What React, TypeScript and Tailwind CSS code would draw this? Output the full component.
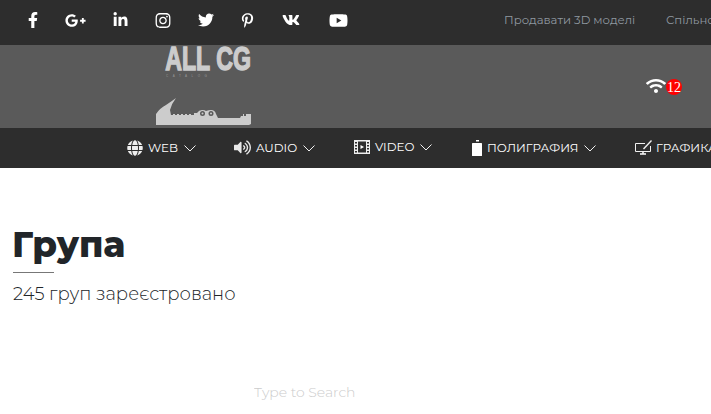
import { FaFacebookF, FaGooglePlusG, FaLinkedinIn, FaInstagram, FaTwitter, FaPinterestP, FaVk, FaYoutube, FaWifi, FaGlobe, FaVolumeUp } from "react-icons/fa";

const Chevron = () => (
  <svg width="12" height="7" viewBox="0 0 12 7" fill="none" stroke="#f0f0f0" strokeWidth="1" className="ml-[6px] mt-[1px]">
    <path d="M0.5 0.5 L6 6 L11.5 0.5" />
  </svg>
);

const VideoIcon = () => (
  <svg width="16" height="14" viewBox="0 0 16 14" fill="#eeeeee">
    <path fillRule="evenodd" d="M0 0h16v14H0z M4 1.500v11h8v-11z" />
    <rect x="1" y="2" width="2" height="1.500" fill="#2d2d2d" />
    <rect x="1" y="5" width="2" height="1.500" fill="#2d2d2d" />
    <rect x="1" y="8" width="2" height="1.500" fill="#2d2d2d" />
    <rect x="1" y="11" width="2" height="1.500" fill="#2d2d2d" />
    <rect x="13" y="2" width="2" height="1.500" fill="#2d2d2d" />
    <rect x="13" y="5" width="2" height="1.500" fill="#2d2d2d" />
    <rect x="13" y="8" width="2" height="1.500" fill="#2d2d2d" />
    <rect x="13" y="11" width="2" height="1.500" fill="#2d2d2d" />
    <path d="M6.500 5 L10 7 L6.500 9z" fill="#ffffff" />
  </svg>
);

const PrintIcon = () => (
  <svg width="10" height="16" viewBox="0 0 10 16" fill="#ffffff">
    <rect x="0" y="3" width="10" height="13" rx="0.500" />
    <rect x="4" y="0" width="3" height="1.500" />
  </svg>
);

const MonitorIcon = () => (
  <svg width="18" height="15" viewBox="0 0 18 15" fill="none" stroke="#f0f0f0" strokeWidth="1">
    <path d="M10 3.500H0.500V11.500H15.500V6" />
    <path d="M8.500 9 L16.500 0.500" strokeWidth="1.400" />
    <path d="M5 14h6" strokeWidth="1.600" />
    <path d="M8 12v2" strokeWidth="1.600" />
  </svg>
);

const socials = [
  { Icon: FaFacebookF, size: 16, w: 10 },
  { Icon: FaGooglePlusG, size: 21, w: 21 },
  { Icon: FaLinkedinIn, size: 16, w: 15 },
  { Icon: FaInstagram, size: 17, w: 16 },
  { Icon: FaTwitter, size: 16, w: 16 },
  { Icon: FaPinterestP, size: 15, w: 13 },
  { Icon: FaVk, size: 18, w: 19 },
  { Icon: FaYoutube, size: 19, w: 22 },
];

export default function App() {
  return (
    <div className="w-[711px] h-[414px] overflow-hidden bg-white font-['Montserrat','Inter','Liberation_Sans',sans-serif]">
      <div className="h-[45px] bg-[#2d2d2d] flex items-center pl-[28px] overflow-hidden">
        <div className="flex items-center gap-[27px] w-[476px] shrink-0 -mt-[5px]">
          {socials.map(({ Icon, size, w }, i) => (
            <span key={i} className="flex justify-center text-white" style={{ width: w }}>
              <Icon size={size} />
            </span>
          ))}
        </div>
        <span className="text-[11.700px] text-[#8f98a0] whitespace-nowrap w-[162px] shrink-0 -mt-[3px]">Продавати 3D моделі</span>
        <span className="text-[11.700px] text-[#8f98a0] whitespace-nowrap -mt-[3px]">Спільнота</span>
      </div>

      <div className="h-[83px] bg-[#5a5a5a] flex justify-between overflow-hidden">
        <div className="ml-[155px] w-[96px] flex flex-col items-end">
          <div className="font-['Liberation_Sans',sans-serif] font-bold text-[34px] leading-[26px] text-[#cccccc] [-webkit-text-stroke:1.500px_#cccccc] whitespace-nowrap scale-x-[0.68] origin-right h-[28px]">ALL CG</div>
          <div className="self-start mt-[1px] ml-[11px] w-[43px] text-[3px] leading-[4px] tracking-[4.500px] text-[#999999] font-['Liberation_Sans',sans-serif] whitespace-nowrap overflow-hidden">CATALOG</div>
          <svg width="95" height="27" viewBox="0 0 95 27" fill="#cccccc" className="mt-[20px] self-end">
            <path d="M0 27V16Q4 10 10 7Q16 3 20 0Q16 5 14 12L15 17H17V16H19V17H21V16H23V17H25V16H27V17H29V16H31V17H33V16H35V17H38V15H41Q43 12 46 12Q49 12 50 13Q53 12 55 12Q59 12 60 16L62 20H84L85 18H87V16H88V18H90V16H95V26L93 27z" />
            <circle cx="46.500" cy="15.500" r="2.500" fill="#5a5a5a" />
            <circle cx="55" cy="15.500" r="2.500" fill="#5a5a5a" />
            <circle cx="46.500" cy="15.500" r="1" />
            <circle cx="55" cy="15.500" r="1" />
          </svg>
        </div>
        <div className="relative mr-[29px] mt-[31px] w-[36px] h-[20px]">
          <FaWifi size={20} className="text-white absolute left-0 top-0" />
          <span className="absolute left-[20px] top-[3px] w-[16px] h-[16px] rounded-full bg-[#ff0000] text-white text-[14px] leading-[17px] text-center font-['Liberation_Serif',serif]">12</span>
        </div>
      </div>

      <div className="h-[40px] bg-[#2d2d2d] flex items-center pl-[127px] overflow-hidden whitespace-nowrap text-[11.900px] text-[#ffffff] font-normal">
        <div className="flex items-center w-[107px] shrink-0"><FaGlobe size={16} className="text-[#eeeeee] mr-[5px]" />WEB<Chevron /></div>
        <div className="flex items-center w-[120px] shrink-0"><FaVolumeUp size={17} className="text-[#e8e8e8] mr-[5px]" />AUDIO<Chevron /></div>
        <div className="flex items-center w-[118px] shrink-0 -mt-[2px]"><span className="mr-[5px]"><VideoIcon /></span>VIDEO<Chevron /></div>
        <div className="flex items-center w-[163px] shrink-0"><span className="mr-[5px] flex"><PrintIcon /></span>ПОЛИГРАФИЯ<Chevron /></div>
        <div className="flex items-center shrink-0"><span className="mr-[3px] flex"><MonitorIcon /></span>ГРАФИКА</div>
      </div>

      <div className="pl-[12px] pt-[55px]">
        <h1 className="text-[35.500px] leading-[44px] font-extrabold text-[#212529]">Група</h1>
        <div className="w-[41px] h-px bg-[#777777] mt-[5px] ml-[1px]" />
        <p className="text-[18px] leading-[24px] font-light text-[#212529] mt-[9px] ml-[1px]">245 груп зареєстровано</p>
        <input readOnly placeholder="Type to Search" className="block mt-[74px] ml-[242px] w-[300px] h-[24px] text-[14px] font-light outline-none placeholder:text-[#cccccc] bg-transparent" />
      </div>
    </div>
  );
}
